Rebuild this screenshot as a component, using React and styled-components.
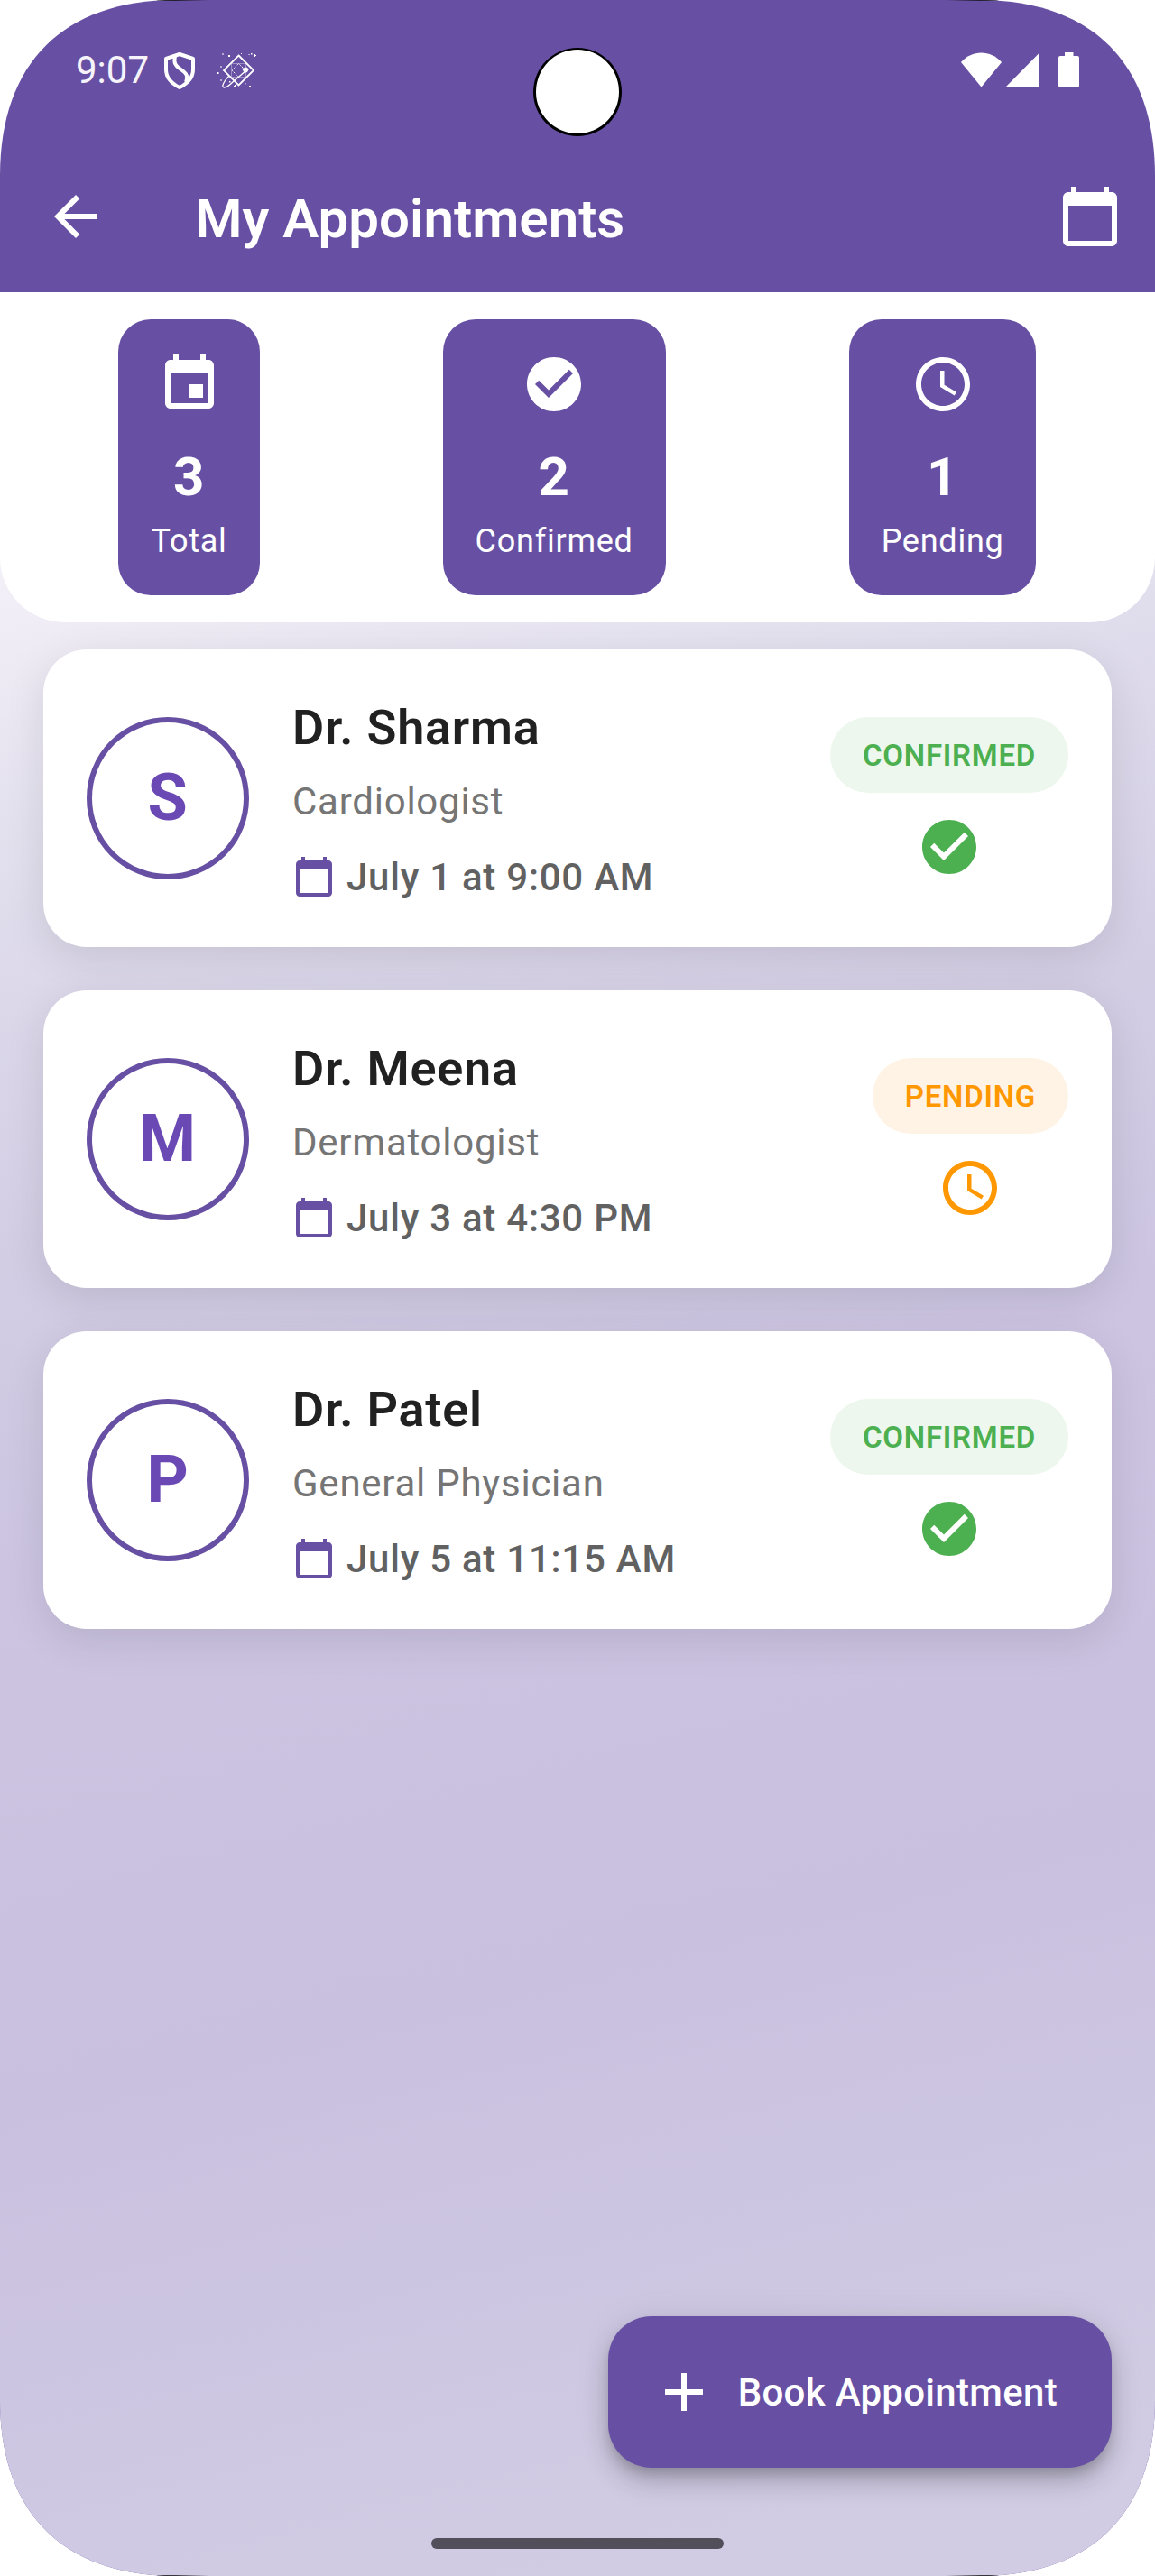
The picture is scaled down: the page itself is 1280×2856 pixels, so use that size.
import React from "react";
import styled, { createGlobalStyle } from "styled-components";

const purple = "#6750a3";

const GlobalStyle = createGlobalStyle`
  * { box-sizing: border-box; }
  body { margin: 0; background: #fff; }
`;

const Screen = styled.div`
  position: relative;
  display: flex;
  flex-direction: column;
  width: 1280px;
  height: 2856px;
  overflow: hidden;
  background: ${purple};
  font-family: Roboto, "Liberation Sans", sans-serif;
  font-size: 42px;
  letter-spacing: 0.75px;
  white-space: nowrap;
  clip-path: path("M0 195C0 70 70 0 195 0H1085C1210 0 1280 70 1280 195V2661C1280 2786 1210 2856 1085 2856H195C70 2856 0 2786 0 2661Z");
`;

const Edge = styled.div`
  position: absolute;
  left: 174px;
  right: 174px;
  height: 1px;
  ${(p) => (p.$bottom ? "bottom: 0;" : "top: 0;")}
  background: linear-gradient(90deg, #111 0, #111 10px, transparent 58px, transparent calc(100% - 58px), #111 calc(100% - 10px));
`;

const Camera = styled.div`
  position: absolute;
  left: 591px;
  top: 53px;
  width: 98px;
  height: 98px;
  border-radius: 50%;
  background: #fff;
  border: 3px solid #000;
  border-top-width: 2px;
`;

const StatusBar = styled.div`
  display: flex;
  align-items: center;
  height: 156px;
  padding: 0 84px;
  color: #fff;
`;

const Time = styled.span`
  width: 96px;
  margin-top: -1px;
  letter-spacing: 0;
  color: #f6f3fb;
`;

const StatusIcons = styled.div`
  display: flex;
  align-items: center;
  gap: 22px;
  margin-left: ${(p) => (p.$end ? "auto" : "0")};
`;

const AppBar = styled.header`
  display: flex;
  align-items: center;
  height: 168px;
  padding: 0 36px 0 48px;
  color: #fff;
`;

const Title = styled.h1`
  flex: 1;
  margin: 5px 0 0 96px;
  font-size: 60px;
  line-height: 78px;
  font-weight: 600;
  letter-spacing: 0;
`;

const Body = styled.main`
  display: flex;
  flex-direction: column;
  flex: 1;
  background: linear-gradient(165.81deg, #fff 0%, #f0edf6 12.8%, #dfdcec 24.1%, #d3cde4 37.7%, #ccc4e1 50%, #c9c0df 70.8%, #d1cce4 94.3%);
`;

const Summary = styled.section`
  display: flex;
  justify-content: space-around;
  padding: 30px;
  border-radius: 0 0 72px 72px;
  background: #fff;
`;

const Tile = styled.div`
  display: flex;
  flex-direction: column;
  align-items: center;
  height: 306px;
  padding: 36px 36px 32px;
  border-radius: 36px;
  background: ${purple};
  color: #fff;
`;

const Count = styled.div`
  margin-top: 24px;
  font-size: 60px;
  line-height: 86px;
  font-weight: 700;
`;

const TileLabel = styled.div`
  margin-top: 2px;
  font-size: 36px;
  line-height: 52px;
`;

const List = styled.section`
  display: flex;
  flex-direction: column;
  gap: 48px;
  padding: 30px 48px 0;
`;

const Card = styled.article`
  display: flex;
  align-items: center;
  height: 330px;
  padding: 48px;
  border-radius: 48px;
  background: #fff;
  box-shadow: 0 12px 45px rgba(0, 0, 0, 0.1);
`;

const Avatar = styled.div`
  width: 180px;
  height: 180px;
  border: 6px solid ${purple};
  border-radius: 50%;
  text-align: center;
  font-size: 72px;
  line-height: 168px;
  font-weight: 700;
  color: #6b49b5;
`;

const Info = styled.div`
  flex: 1;
  margin-left: 48px;
`;

const Name = styled.div`
  font-size: 54px;
  line-height: 75px;
  font-weight: 600;
  color: #212121;
`;

const Specialty = styled.div`
  margin-top: 15px;
  line-height: 60px;
  color: #757575;
`;

const When = styled.div`
  display: flex;
  align-items: center;
  gap: 12px;
  margin-top: 23px;
  line-height: 60px;
  font-weight: 500;
  color: #616161;
`;

const WhenText = styled.span`
  padding-top: 1px;
  line-height: 59px;
`;

const Status = styled.div`
  display: flex;
  flex-direction: column;
  align-items: center;
  gap: 24px;
  color: ${(p) => p.$color};
`;

const Pill = styled.div`
  padding: 19px 36px 17px;
  border-radius: 42px;
  background: ${(p) => p.$bg};
  font-size: 33px;
  line-height: 48px;
  font-weight: 600;
  letter-spacing: 0.75px;
`;

const BookButton = styled.button`
  display: flex;
  align-items: center;
  align-self: flex-end;
  gap: 24px;
  height: 168px;
  margin: auto 48px 78px 0;
  padding: 0 60px 0 48px;
  border: 0;
  border-radius: 48px;
  background: ${purple};
  color: #fff;
  font: 500 42px Roboto, "Liberation Sans", sans-serif;
  letter-spacing: 0.3px;
  box-shadow: 0 9px 15px -3px rgba(0, 0, 0, 0.2), 0 18px 30px rgba(0, 0, 0, 0.14), 0 3px 40px rgba(0, 0, 0, 0.08);
`;

const HomeHandle = styled.div`
  align-self: center;
  width: 324px;
  height: 12px;
  margin-bottom: 30px;
  border-radius: 6px;
  background: #524f5a;
`;

const Glyph = styled.svg`
  flex-shrink: 0;
  width: ${(p) => p.$size}px;
  height: ${(p) => p.$size}px;
  fill: ${(p) => p.$color};
`;

const paths = {
  back: "M20 11H7.83l5.59-5.59L12 4l-8 8 8 8 1.41-1.41L7.83 13H20v-2z",
  calendar: "M20 3h-1V1h-2v2H7V1H5v2H4c-1.1 0-2 .9-2 2v16c0 1.1.9 2 2 2h16c1.1 0 2-.9 2-2V5c0-1.1-.9-2-2-2zm0 18H4V8h16v13z",
  event: "M17 12h-5v5h5v-5zM16 1v2H8V1H6v2H5c-1.11 0-1.99.9-1.99 2L3 19c0 1.1.89 2 2 2h14c1.1 0 2-.9 2-2V5c0-1.1-.9-2-2-2h-1V1h-2zm3 18H5V8h14v11z",
  check: "M12 2C6.48 2 2 6.48 2 12s4.48 10 10 10 10-4.48 10-10S17.52 2 12 2zm-2 15l-5-5 1.41-1.41L10 14.17l7.59-7.59L19 8l-9 9z",
  clock: "M11.99 2C6.47 2 2 6.48 2 12s4.47 10 9.99 10C17.52 22 22 17.52 22 12S17.52 2 11.99 2zM12 20c-4.42 0-8-3.58-8-8s3.58-8 8-8 8 3.58 8 8-3.58 8-8 8zm.5-13H11v6l5.25 3.15.75-1.23-4.5-2.67z",
  plus: "M19 13h-6v6h-2v-6H5v-2h6V5h2v6h6v2z",
};

const Icon = ({ name, size = 72, color = "currentColor" }) => (
  <Glyph $size={size} $color={color} viewBox="0 0 24 24">
    <path d={paths[name]} />
  </Glyph>
);

const Shield = () => (
  <svg width="38" height="44" viewBox="0 0 38 44" fill="none" stroke="#fff" strokeWidth="4" strokeLinejoin="round">
    <path d="M19 4 34 9V21C34 30 27 37 19 41C11 37 4 30 4 21V9Z" />
    <path d="M14 6C12 14 15 17 19 20C26 25 29 27 26 35" />
  </svg>
);

const Orbit = () => (
  <svg width="48" height="44" viewBox="0 0 48 44" fill="none" stroke="#fff">
    <path d="M24.500 5.500 41 22 24.500 38.500 8 22Z" strokeWidth="1.8" />
    <path d="M24.500 14.500 32 22 24.500 29.500 17 22Z" strokeDasharray="1.500 1" />
    <path d="M16.500 14.500H32.500V29.500H16.500Z" strokeOpacity=".35" />
    <path d="M33 22 19 34C14 39 8 43 7 40C6 38 10 32 14 28" strokeWidth="1.300" />
    <path d="M28 20 33 18.500 36 20.500 34 24 31 25Z" fill="#fff" stroke="none" />
    <path
      fill="#fff"
      stroke="none"
      d="M13 5h2v2h-2zM38 3h1.500v1.500H38zM1 24h1.500v2H1zM36 39h2v2h-2zM27 3h1v1h-1zM45 20h1v1h-1zM39 30h2v1h-2zM31 36h1.500v1.500H31zM21 0h1.500v1H21zM14 34h1.500v1.500H14zM41 5h1V4h1v1h1v1h-1v1h-1V6h-1zM19 39h1v-1h1v1h1v1h-1v1h-1v-1h-1z"
    />
    <path fill="#fff" fillOpacity=".5" stroke="none" d="M6 3h2v2H6zM4 17h2v2H4zM4 32h2v2H4zM35 4h2v1h-2z" />
  </svg>
);

const Signals = () => (
  <svg width="131" height="40" viewBox="0 0 131 40" fill="#fff">
    <path d="M0 11C12-3 33-3 45 11L22.500 38.500Z" />
    <path d="M49 39 86.500 1V39Z" />
    <path d="M115 0H124.500V4H129Q131 4 131 6V37Q131 39 129 39H110Q108 39 108 37V6Q108 4 110 4H115Z" />
  </svg>
);

const stats = [
  { icon: "event", count: 3, label: "Total" },
  { icon: "check", count: 2, label: "Confirmed" },
  { icon: "clock", count: 1, label: "Pending" },
];

const statusStyles = {
  CONFIRMED: { color: "#4caf50", bg: "#edf7ed", icon: "check" },
  PENDING: { color: "#ff9800", bg: "#fff3e5", icon: "clock" },
};

const appointments = [
  { doctor: "Dr. Sharma", initial: "S", specialty: "Cardiologist", when: "July 1 at 9:00 AM", status: "CONFIRMED" },
  { doctor: "Dr. Meena", initial: "M", specialty: "Dermatologist", when: "July 3 at 4:30 PM", status: "PENDING" },
  { doctor: "Dr. Patel", initial: "P", specialty: "General Physician", when: "July 5 at 11:15 AM", status: "CONFIRMED" },
];

function Appointment({ item }) {
  const s = statusStyles[item.status];
  return (
    <Card>
      <Avatar>{item.initial}</Avatar>
      <Info>
        <Name>{item.doctor}</Name>
        <Specialty>{item.specialty}</Specialty>
        <When>
          <Icon name="calendar" size={48} color={purple} />
          <WhenText>{item.when}</WhenText>
        </When>
      </Info>
      <Status $color={s.color}>
        <Pill $bg={s.bg}>{item.status}</Pill>
        <Icon name={s.icon} />
      </Status>
    </Card>
  );
}

export default function App() {
  return (
    <>
      <GlobalStyle />
      <Screen>
        <StatusBar>
          <Time>9:07</Time>
          <StatusIcons>
            <Shield />
            <Orbit />
          </StatusIcons>
          <StatusIcons $end>
            <Signals />
          </StatusIcons>
        </StatusBar>
        <AppBar>
          <Icon name="back" />
          <Title>My Appointments</Title>
          <Icon name="calendar" />
        </AppBar>
        <Body>
          <Summary>
            {stats.map((s) => (
              <Tile key={s.label}>
                <Icon name={s.icon} />
                <Count>{s.count}</Count>
                <TileLabel>{s.label}</TileLabel>
              </Tile>
            ))}
          </Summary>
          <List>
            {appointments.map((a) => (
              <Appointment key={a.doctor} item={a} />
            ))}
          </List>
          <BookButton>
            <Icon name="plus" />
            Book Appointment
          </BookButton>
          <HomeHandle />
        </Body>
        <Camera />
        <Edge />
        <Edge $bottom />
      </Screen>
    </>
  );
}
